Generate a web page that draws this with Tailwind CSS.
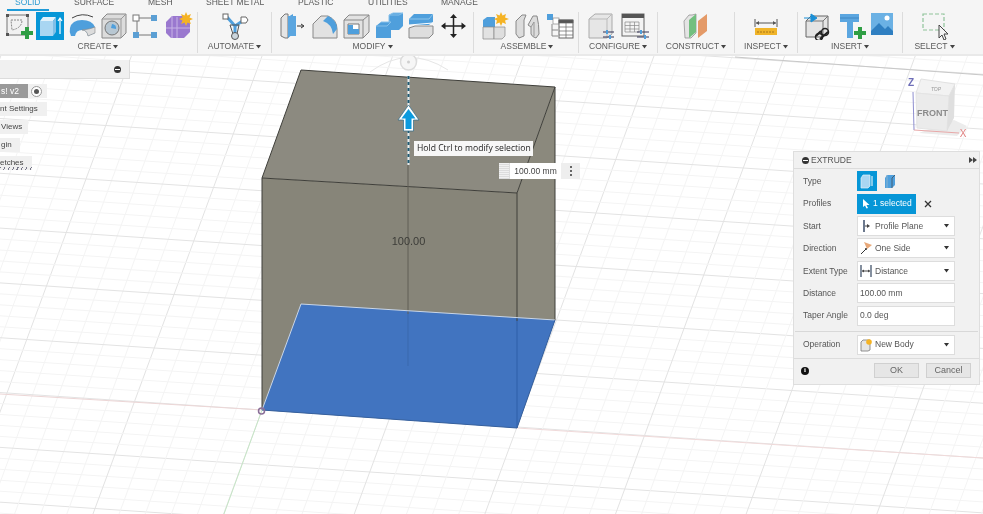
<!DOCTYPE html>
<html lang="en">
<head>
  <meta charset="UTF-8" />
  <title>Extrude</title>
  <meta name="viewport" content="width=device-width, initial-scale=1.0">
  <script src="https://cdn.jsdelivr.net/npm/@tailwindcss/browser@4"></script>
</head>
<body class="bg-white">
<div class="relative w-[983px] h-[514px] overflow-hidden bg-white text-[#5a5a5a] blur-[0.3px] font-['Liberation_Sans',sans-serif]">

  <!-- model space -->
  <svg id="canvas" class="absolute left-0 top-0" width="983" height="514" viewBox="0 0 983 514">
    <g id="grid"></g>
    <line x1="0" y1="394" x2="262" y2="410" stroke="#ecd6d6"/>
    <line x1="517" y1="428" x2="983" y2="458" stroke="#f0dada"/>
    <line x1="262" y1="410" x2="224" y2="514" stroke="#c6e6c6"/>
    <line x1="735" y1="57" x2="983" y2="75" stroke="#c8c8c8"/>
    <path d="M370 72Q408 44 448 70" fill="none" stroke="#e6e6e6"/>
    <circle cx="408.5" cy="62" r="8" fill="#f6f6f6" stroke="#dcdcdc" stroke-width="1.5"/>
    <circle cx="408.5" cy="62" r="1.5" fill="#cfcfcf"/>
    <polygon points="301,70 555,87 517,193 262,178" fill="#8c8a80"/>
    <polygon points="262,178 517,193 517,428 262,410" fill="#878579"/>
    <polygon points="517,193 555,87 555,320 517,428" fill="#8b897d"/>
    <polygon points="301,304 555,320 517,428 262,410" fill="#4174c0"/>
    <path d="M301 70L555 87L517 193L262 178ZM262 178V410M517 193V321M555 87V320" fill="none" stroke="#3f3f3a"/>
    <line x1="517" y1="321" x2="517" y2="428" stroke="#2f5fa8"/>
    <line x1="408" y1="165" x2="408" y2="314" stroke="#605f57"/>
    <line x1="408" y1="314" x2="408" y2="366" stroke="#3a69ad"/>
    <path d="M262 410L301 304L555 320" fill="none" stroke="#c9d6e8"/>
    <path d="M262 410L517 428L555 320" fill="none" stroke="#35609f"/>
    <circle cx="261.500" cy="411" r="3" fill="none" stroke="#8a6f98" stroke-width="1.500"/>
    <line x1="408.500" y1="76" x2="408.500" y2="165" stroke="#e8eef0" stroke-width="2"/>
    <line x1="408.500" y1="76" x2="408.500" y2="165" stroke="#1f5a73" stroke-width="2" stroke-dasharray="3 3"/>
    <path d="M408.500 105L419 120H413.500V131H403.500V120H398Z" fill="#fff" stroke="#2d6b8a" stroke-width=".7" stroke-linejoin="round"/>
    <path d="M408.500 109L415.500 118.500H411.500V129H405.500V118.500H401.500Z" fill="#0b9ade"/>
    <text x="408.500" y="245" text-anchor="middle" font-size="11" fill="#3c3c38">100.00</text>

    <!-- view cube -->
    <polygon points="919,133 957,136 967,126 954,120" fill="#ececec"/>
    <polygon points="921,79 955,84 949,96 916,93" fill="#f2f2f2" stroke="#e2e2e2"/>
    <polygon points="916,93 949,96 947,131 917,128" fill="#ebebeb" stroke="#e4e4e4"/>
    <polygon points="949,96 955,84 954,118 947,131" fill="#dfdfdf"/>
    <text x="936" y="91" text-anchor="middle" font-size="5" font-style="italic" fill="#999">TOP</text>
    <text x="932.500" y="116" text-anchor="middle" font-size="9" font-weight="bold" fill="#8b8b8b">FRONT</text>
    <line x1="913" y1="92" x2="914" y2="130" stroke="#8f8fd0"/>
    <line x1="914" y1="130" x2="959" y2="133" stroke="#e8a8a8"/>
    <text x="911" y="86" text-anchor="middle" font-size="10" font-weight="bold" fill="#6f6fb8">Z</text>
    <text x="963" y="137" text-anchor="middle" font-size="10" fill="#e08080">X</text>
  </svg>

  <!-- toolbar -->
  <header class="relative h-[56px] bg-[#f5f5f5] border-b-2 border-[#e9e9e9]">
    <nav class="relative h-[12px] text-[8.5px] leading-none">
      <span class="absolute left-[15px] top-[-2px] text-[#2d9bd2]">SOLID</span>
      <span class="absolute left-[74px] top-[-2px]">SURFACE</span>
      <span class="absolute left-[148px] top-[-2px]">MESH</span>
      <span class="absolute left-[206px] top-[-2px]">SHEET METAL</span>
      <span class="absolute left-[298px] top-[-2px]">PLASTIC</span>
      <span class="absolute left-[368px] top-[-2px]">UTILITIES</span>
      <span class="absolute left-[441px] top-[-2px]">MANAGE</span>
      <i class="absolute left-[7px] top-[9px] w-[42px] h-[2px] bg-[#1f9bd8]"></i>
    </nav>
    <div class="flex h-[41px]">
      <section class="w-[198px] border-r border-[#dcdcdc] flex flex-col items-center pr-[1px]">
        <div class="flex h-[28px]">
          <svg width="32" height="28"><rect x="5" y="3" width="21" height="20" fill="#f1f1f1" stroke="#777"/><path d="M9 8H20Q20 16 10 18Z" fill="none" stroke="#888" stroke-dasharray="2 1"/><path d="M4 2h3v3H4zM24 2h3v3h-3zM4 21h3v3H4z" fill="#555"/><path d="M21 19h4v-4h4v4h4v4h-4v4h-4v-4h-4z" transform="translate(-2 0)" fill="#2f9e44"/></svg>
          <svg width="32" height="28"><rect x="2" width="28" height="28" fill="#0696d7"/><path d="M6 9l3-4h13l-3 4z" fill="#e3f2fb"/><rect x="6" y="9" width="13" height="15" fill="#a9d6f2"/><path d="M19 9l3-4v15l-3 4z" fill="#7fbfe8"/><path d="M26 22V6M24 9l2-3 2 3" fill="none" stroke="#fff" stroke-width="1.200"/></svg>
          <svg width="32" height="28"><path d="M4 16Q6 8 16 8Q26 8 29 15V21L22 24Q21 18 16 18Q10 18 9 24H5Q3 20 4 16Z" fill="#4f9fdc"/><path d="M29 15V21L22 24Q21 18 16 18Q25 17 29 15Z" fill="#dcdcdc" stroke="#888" stroke-width=".6"/><path d="M6 6Q16 0 27 5" fill="none" stroke="#444"/></svg>
          <svg width="32" height="28"><path d="M4 7L9 2H28V21L23 26H4Z" fill="#dcdcdc" stroke="#888"/><path d="M23 7V26M4 7H23M23 7L28 2" fill="none" stroke="#999"/><circle cx="14" cy="16" r="7" fill="#b8c7d2" stroke="#777"/><path d="M14 12a4 4 0 0 1 4 5l-5-1z" fill="#4f9fdc"/></svg>
          <svg width="32" height="28"><path d="M9 6H21M9 23H21M7 9V20" stroke="#777" fill="none"/><rect x="3" y="3" width="6" height="6" fill="#fff" stroke="#777"/><rect x="21" y="3" width="6" height="6" fill="#5b9fd4"/><rect x="3" y="20" width="6" height="6" fill="#5b9fd4"/><rect x="21" y="20" width="6" height="6" fill="#5b9fd4"/></svg>
          <svg width="32" height="28"><path d="M4 10L10 4H24L28 8V20L22 26H9L4 21Z" fill="#9a78cf"/><path d="M4 16H28M15 5V26M10 4V26" stroke="#c7b3e6" fill="none"/><path d="M24 0l1.500 3.500L29 2l-1.500 3.500L31 7l-3.500 1.500L29 12l-3.500-1.500L24 14l-1.500-3.500L19 12l1.500-3.500L17 7l3.500-1.500L19 2l3.500 1.500z" fill="#f5b324"/></svg>
        </div>
        <div class="flex items-center gap-[2px] h-[17px] text-[8.5px] leading-none">CREATE <svg width="5" height="4"><path d="M0 0h5L2.500 3.500z" fill="#444"/></svg></div>
      </section>
      <section class="w-[74px] border-r border-[#dcdcdc] flex flex-col items-center">
        <div class="flex h-[28px]">
          <svg width="32" height="28"><path d="M8 5L16 14L25 8M16 14V23" fill="none" stroke="#4f9fdc" stroke-width="3"/><path d="M11 13L14 22H18L20 13Z" fill="none" stroke="#555"/><rect x="4" y="2" width="5" height="5" fill="#fff" stroke="#666"/><path d="M22 5h5l2 3-2 3h-5z" fill="#fff" stroke="#666"/><circle cx="16" cy="24" r="3.500" fill="#cbd5dc" stroke="#555"/></svg>
        </div>
        <div class="flex items-center gap-[2px] h-[17px] text-[8.5px] leading-none">AUTOMATE <svg width="5" height="4"><path d="M0 0h5L2.500 3.500z" fill="#444"/></svg></div>
      </section>
      <section class="w-[202px] border-r border-[#dcdcdc] flex flex-col items-center">
        <div class="flex gap-[0.400px] h-[28px]">
          <svg width="32" height="28"><path d="M5 6L9 2H12V26H9L5 24Z" fill="#e5e5e5" stroke="#777"/><path d="M12 5L17 2V22L12 26Z" fill="#4f9fdc"/><rect x="12" y="4" width="8" height="20" fill="#5ba6e0"/><path d="M21 14H27M25 12l3 2-3 2" stroke="#333" fill="none"/></svg>
          <svg width="32" height="28"><path d="M5 12L13 4H20Q29 8 29 17V26H5Z" fill="#e2e2e2" stroke="#888"/><path d="M20 4Q29 8 29 17L25 22Q24 12 15 9Z" fill="#4f9fdc"/></svg>
          <svg width="32" height="28"><path d="M4 8L9 3H29V20L23 26H4Z" fill="#e2e2e2" stroke="#888"/><path d="M4 8H23V26M23 8L29 3" fill="none" stroke="#888"/><path d="M8 12H19V22H8Z" fill="#fff" stroke="#777"/><path d="M8 13H13V17H19V22H8Z" fill="#4f9fdc"/></svg>
          <svg width="32" height="28"><path d="M3 26V14L8 10H16V3L20 1H30V14L26 18H18V26Z" fill="#4f9fdc"/><path d="M16 10V3L20 1H30L26 3H16M8 10H18L14 14H3" fill="none" stroke="#86c0ea"/></svg>
          <svg width="32" height="28"><path d="M4 7L9 2H28V10L24 13H4Z" fill="#4f9fdc"/><path d="M4 7H24L28 2" fill="none" stroke="#8cc4ea"/><path d="M4 13L28 11M4 15.500L28 13" stroke="#fff"/><path d="M4 16L10 14H28V22L24 26H4Z" fill="#dedede" stroke="#888"/></svg>
          <svg width="32" height="28"><path d="M16.500 5V23M7 14H26" stroke="#222" stroke-width="1.500"/><path d="M16.500 2l3.500 4h-7zM16.500 26l3.500-4h-7zM4 14l4.500-3.500v7zM29 14l-4.500-3.500v7z" fill="#222"/></svg>
        </div>
        <div class="flex items-center gap-[2px] h-[17px] text-[8.5px] leading-none">MODIFY <svg width="5" height="4"><path d="M0 0h5L2.500 3.500z" fill="#444"/></svg></div>
      </section>
      <section class="w-[105px] border-r border-[#dcdcdc] flex flex-col items-center pl-[2px]">
        <div class="flex gap-[0.500px] h-[28px]">
          <svg width="32" height="28"><path d="M4 8L8 5H16V15H4Z" fill="#4f9fdc"/><path d="M4 15H15V27H4Z" fill="#e2e2e2" stroke="#888" stroke-width=".7"/><path d="M15 15H26V24L23 27H15Z" fill="#dedede" stroke="#888" stroke-width=".7"/><path d="M22 0l1.500 3.500L27 2l-1 3.500L30 7l-4 1.500L27 12l-3.500-1.500L22 14l-1.500-3.500L17 12l1-3.500L15 7l3.500-1.500L17 2l3.500 1.500z" fill="#f5b324"/></svg>
          <svg width="32" height="28"><path d="M5 9L11 3H15L13 8V24L8 26L5 22Z" fill="#dcdcdc" stroke="#888"/><path d="M17 13L22 4H26Q28 12 28 22L25 26Q21 25 20 22V15Z" fill="#dcdcdc" stroke="#888"/><path d="M20 15L23 10V24" fill="none" stroke="#999"/></svg>
          <svg width="32" height="28"><rect x="3" y="2" width="6" height="6" fill="#4f9fdc"/><rect x="9" y="6" width="6" height="6" fill="#fff" stroke="#888" stroke-width=".7"/><path d="M8 12V24H14M8 18H14" fill="none" stroke="#888"/><rect x="15" y="8" width="14" height="18" fill="#fff" stroke="#666"/><path d="M15 8h14v3H15zM15 15h14M15 19h14M15 23h14M22 11v15" fill="#555" stroke="#666" stroke-width=".7"/></svg>
        </div>
        <div class="flex items-center gap-[2px] h-[17px] text-[8.5px] leading-none">ASSEMBLE <svg width="5" height="4"><path d="M0 0h5L2.500 3.500z" fill="#444"/></svg></div>
      </section>
      <section class="w-[79px] border-r border-[#dcdcdc] flex flex-col items-center">
        <div class="flex gap-[1px] h-[28px]">
          <svg width="32" height="28"><path d="M3 7L9 2H26V22L21 26H3Z" fill="#e6e6e6" stroke="#aaa"/><path d="M3 7H21V26M21 7L26 2" fill="none" stroke="#bbb"/><path d="M17 20H28M17 25H28" stroke="#335"/><path d="M21 18v4M24 23v4" stroke="#4f9fdc" stroke-width="2"/></svg>
          <svg width="32" height="28"><rect x="3" y="2" width="22" height="22" fill="#f4f4f4" stroke="#666"/><rect x="3" y="2" width="22" height="4" fill="#555"/><path d="M6 10h14v10H6zM6 13.500h14M6 17h14M11 10v10M15.500 10v10" fill="none" stroke="#888" stroke-width=".7"/><path d="M18 20H30M18 25H30" stroke="#335"/><path d="M22 18v4M26 23v4" stroke="#4f9fdc" stroke-width="2"/></svg>
        </div>
        <div class="flex items-center gap-[2px] h-[17px] text-[8.5px] leading-none">CONFIGURE <svg width="5" height="4"><path d="M0 0h5L2.500 3.500z" fill="#444"/></svg></div>
      </section>
      <section class="w-[77px] border-r border-[#dcdcdc] flex flex-col items-center">
        <div class="flex h-[28px]">
          <svg width="32" height="28"><path d="M4 9L9 3H12L16 2V21L11 26H5Z" fill="#e4e4e4" stroke="#888" stroke-width=".7"/><path d="M9 8L16 2V20L9 26Z" fill="#72bf7f"/><path d="M18 9L27 2V19L18 26Z" fill="#e49a68"/></svg>
        </div>
        <div class="flex items-center gap-[2px] h-[17px] text-[8.5px] leading-none">CONSTRUCT <svg width="5" height="4"><path d="M0 0h5L2.500 3.500z" fill="#444"/></svg></div>
      </section>
      <section class="w-[63px] border-r border-[#dcdcdc] flex flex-col items-center">
        <div class="flex h-[28px]">
          <svg width="32" height="28"><path d="M5 7V15M27 7V15M6 11H26" stroke="#555" fill="none"/><path d="M6 11l3-2v4zM26 11l-3-2v4z" fill="#555"/><rect x="5" y="16" width="22" height="7" fill="#f0b429"/><path d="M8 19v2M11 19v2M14 19v2M17 19v2M20 19v2M23 19v2" stroke="#a8761a"/></svg>
        </div>
        <div class="flex items-center gap-[2px] h-[17px] text-[8.5px] leading-none">INSPECT <svg width="5" height="4"><path d="M0 0h5L2.500 3.500z" fill="#444"/></svg></div>
      </section>
      <section class="w-[105px] border-r border-[#dcdcdc] flex flex-col items-center">
        <div class="flex h-[28px]">
          <svg width="34" height="28"><path d="M4 9L9 4H26V20L21 25H4Z" fill="#e4e4e4" stroke="#666"/><path d="M21 9V25M21 9H4M21 9L26 4" fill="none" stroke="#777"/><path d="M2 6H11M9 2l6 4-6 4z" fill="#1b8fd6" stroke="#1b8fd6"/><path d="M14 24L19 19M18 27l8-7" stroke="#222" stroke-width="2"/><circle cx="23" cy="20" r="3.500" fill="none" stroke="#222" stroke-width="1.500"/><circle cx="17" cy="25" r="3.500" fill="none" stroke="#222" stroke-width="1.500"/></svg>
          <svg width="32" height="28"><path d="M4 2H23V10H17V26H11V10H4Z" fill="#5ba6e0"/><path d="M4 6H23" stroke="#3f86c2"/><path d="M18 19h4v-4h4v4h4v4h-4v4h-4v-4h-4z" fill="#2f9e44"/></svg>
          <svg width="30" height="28"><rect x="3" y="1" width="22" height="22" fill="#6bb1e4"/><path d="M3 19L11 11L17 17L20 14L25 19V23H3Z" fill="#2f7fc1"/><circle cx="19" cy="6" r="2.500" fill="#fff"/></svg>
        </div>
        <div class="flex items-center gap-[2px] h-[17px] text-[8.5px] leading-none">INSERT <svg width="5" height="4"><path d="M0 0h5L2.500 3.500z" fill="#444"/></svg></div>
      </section>
      <section class="w-[63px] flex flex-col items-center">
        <div class="flex h-[28px]">
          <svg width="32" height="28"><rect x="4" y="2" width="21" height="16" fill="none" stroke="#8fc49a" stroke-width="1.200" stroke-dasharray="4 2"/><path d="M20 13V26L23 23L25 28L27 27L25 22H29Z" fill="#f4f4f4" stroke="#444"/></svg>
        </div>
        <div class="flex items-center gap-[2px] h-[17px] text-[8.5px] leading-none">SELECT <svg width="5" height="4"><path d="M0 0h5L2.500 3.500z" fill="#444"/></svg></div>
      </section>
    </div>
  </header>

  <!-- browser -->
  <aside class="absolute left-0 top-[60px] text-[8px] leading-none text-[#444]">
    <div class="w-[130px] h-[19px] bg-[#f0f0f0] border-b border-r border-[#dcdcdc] flex items-center justify-end pr-[8px]">
      <span class="flex items-center justify-center size-[7px] rounded-full bg-[#333]"><i class="w-[5px] h-[1px] bg-white"></i></span>
    </div>
    <div class="mt-[5px] flex flex-col items-start gap-[4px]">
      <div class="flex items-center h-[14px] w-[47px] bg-[#f0f0f0]">
        <span class="flex items-center w-[28px] h-full bg-[#9a9a9a] text-white text-[8.5px] pl-[1px]">s! v2</span>
        <span class="ml-[3px] flex items-center justify-center size-[11px] rounded-full bg-white border border-[#999]"><i class="size-[5px] rounded-full bg-[#555]"></i></span>
      </div>
      <div class="flex items-center h-[14px] w-[47px] bg-[#f0f0f0] whitespace-nowrap overflow-hidden">nt Settings</div>
      <div class="flex items-center h-[14px] w-[28px] bg-[#f0f0f0] pl-[1px]">Views</div>
      <div class="flex items-center h-[14px] w-[20px] bg-[#f0f0f0] pl-[1px]">gin</div>
      <div class="relative flex items-center h-[14px] w-[32px] bg-[#f0f0f0]">etches
        <i class="absolute left-0 bottom-0 w-full h-[3px] bg-[repeating-linear-gradient(115deg,#778_0,#778_1px,transparent_1px,transparent_4px)]"></i>
      </div>
    </div>
  </aside>

  <!-- tooltip and distance input -->
  <div class="absolute left-[414px] top-[141px] w-[119px] h-[15px] bg-[#f7f7f7] text-[#222] text-[8.6px] leading-[15px] pl-[3px] whitespace-nowrap font-['Open_Sans',sans-serif]">Hold Ctrl to modify selection</div>
  <div class="absolute left-[499px] top-[163px] flex h-[16px] w-[81px] items-center bg-[#eeeeee]">
    <span class="w-[11px] h-full border-r border-[#ddd] bg-[repeating-linear-gradient(0deg,#ddd_0,#ddd_1px,#f1f1f1_1px,#f1f1f1_2px)]"></span>
    <span class="w-[51px] h-full bg-white text-[#444] text-[8.5px] leading-[16px] text-center">100.00 mm</span>
    <span class="flex-1 flex flex-col items-center gap-[2px]"><i class="size-[2px] bg-[#666]"></i><i class="size-[2px] bg-[#666]"></i><i class="size-[2px] bg-[#666]"></i></span>
  </div>

  <!-- extrude dialog -->
  <div class="absolute left-[793px] top-[151px] w-[187px] h-[234px] bg-[#f1f1f1] border border-[#dedede] text-[8.5px] text-[#555] leading-none">
    <div class="h-[17px] border-b border-[#dcdcdc] flex items-center pl-[8px] pr-[2px]">
      <span class="flex items-center justify-center size-[7px] rounded-full bg-[#333] mr-[2px]"><i class="w-[5px] h-[1px] bg-white"></i></span>
      <span class="flex-1">EXTRUDE</span>
      <svg width="8" height="6"><path d="M0 0l4 3-4 3zM4 0l4 3-4 3z" fill="#444"/></svg>
    </div>
    <div class="pl-[9px] pr-[24px] pt-[1px]">
      <div class="flex items-center h-[22.400px]"><span class="w-[54px]">Type</span>
        <span class="flex items-center justify-center size-[20px] bg-[#0696d7]"><svg width="14" height="15"><path d="M1 4L3 1H10V12L8 14H1Z" fill="#a9d6f2" stroke="#e3f2fb" stroke-width=".7"/><path d="M12 12V2" stroke="#fff"/></svg></span>
        <span class="ml-[3px] flex items-center justify-center size-[20px]"><svg width="14" height="15"><path d="M2 4L4 1H12V11L9 14H2Z" fill="#4f9fdc"/><path d="M4 1V14" stroke="#89b3cf"/><path d="M9 4V14M9 4L12 1" stroke="#3f4e5a" stroke-width=".8"/></svg></span>
      </div>
      <div class="flex items-center h-[22.400px]"><span class="w-[54px]">Profiles</span>
        <span class="flex items-center h-[20px] w-[59px] bg-[#0696d7] text-white pl-[6px]"><svg width="7" height="10" class="mr-[3px]"><path d="M0 0V8L2 6.500L3.500 9.500L5 9L3.500 6H6.500Z" fill="#fff"/></svg>1 selected</span>
        <svg width="8" height="8" class="ml-[8px]"><path d="M1 1L7 7M7 1L1 7" stroke="#333" stroke-width="1.300"/></svg>
      </div>
      <div class="flex items-center h-[22.400px]"><span class="w-[54px]">Start</span>
        <div class="flex items-center h-[20px] w-[98px] bg-white border border-[#ddd] pl-[1px] pr-[5px]"><svg width="14" height="14" class="mr-[2px]"><path d="M5 1V13" stroke="#1c3050" stroke-width="1.300"/><path d="M6 7H9" stroke="#444"/><path d="M8 5l3 2-3 2z" fill="#444"/></svg><span class="flex-1">Profile Plane</span><svg width="5" height="4"><path d="M0 0h5L2.500 3.500z" fill="#333"/></svg></div>
      </div>
      <div class="flex items-center h-[22.400px]"><span class="w-[54px]">Direction</span>
        <div class="flex items-center h-[20px] w-[98px] bg-white border border-[#ddd] pl-[1px] pr-[5px]"><svg width="14" height="14" class="mr-[2px]"><path d="M5 1L13 4L8 8Z" fill="#e8a878"/><path d="M7 8L2 13" stroke="#333"/><circle cx="7" cy="8" r="1" fill="#333"/></svg><span class="flex-1">One Side</span><svg width="5" height="4"><path d="M0 0h5L2.500 3.500z" fill="#333"/></svg></div>
      </div>
      <div class="flex items-center h-[22.400px]"><span class="w-[54px]">Extent Type</span>
        <div class="flex items-center h-[20px] w-[98px] bg-white border border-[#ddd] pl-[1px] pr-[5px]"><svg width="14" height="14" class="mr-[2px]"><path d="M2 1V13M12 1V13" stroke="#34475f" stroke-width="1.200"/><path d="M3 7H11" stroke="#444"/><path d="M3 7l2-1.500v3zM11 7l-2-1.500v3z" fill="#444"/></svg><span class="flex-1">Distance</span><svg width="5" height="4"><path d="M0 0h5L2.500 3.500z" fill="#333"/></svg></div>
      </div>
      <div class="flex items-center h-[22.400px]"><span class="w-[54px]">Distance</span>
        <div class="flex items-center h-[20px] w-[98px] bg-white border border-[#ddd] pl-[2px]">100.00 mm</div>
      </div>
      <div class="flex items-center h-[22.400px]"><span class="w-[54px]">Taper Angle</span>
        <div class="flex items-center h-[20px] w-[98px] bg-white border border-[#ddd] pl-[2px]">0.0 deg</div>
      </div>
    </div>
    <div class="mx-[1px] mt-[4px] border-t border-[#d8d8d8]"></div>
    <div class="flex items-center h-[26px] pl-[9px]"><span class="w-[54px]">Operation</span>
      <div class="flex items-center h-[20px] w-[98px] bg-white border border-[#ddd] pl-[1px] pr-[5px]"><svg width="14" height="14" class="mr-[2px]"><path d="M2 4L4 2H11V12L9 13H2Z" fill="#e6e6e6" stroke="#777" stroke-width=".8"/><circle cx="10" cy="4" r="2.800" fill="#f5b324"/></svg><span class="flex-1">New Body</span><svg width="5" height="4"><path d="M0 0h5L2.500 3.500z" fill="#333"/></svg></div>
    </div>
    <div class="flex items-center h-[25px] border-t border-[#dcdcdc] pl-[7px] pr-[7px]">
      <span class="flex items-center justify-center size-[8px] rounded-full bg-[#111] text-white text-[7px] font-bold font-['Liberation_Serif',serif]">i</span>
      <button class="ml-[65px] w-[45px] h-[15px] bg-[#e6e6e6] border border-[#d0d0d0] text-[#666] text-[9px] leading-none">OK</button>
      <button class="ml-[7px] w-[45px] h-[15px] bg-[#e6e6e6] border border-[#d0d0d0] text-[#666] text-[9px] leading-none">Cancel</button>
    </div>
  </div>
</div>

<script>
  // ground grid: 10 mm minor cells, 50 mm major cells
  const grid = document.getElementById('grid');
  const ox = 262, oy = 410, ux = 25.5, uy = 1.7, vx = 3.95, vy = -10.7;
  let out = '';
  for (let i = -60; i <= 60; i++) {
    const major = i % 5 === 0;
    const stroke = major ? '#e3e3e3' : '#f4f4f4';
    out += `<line x1="${ox + i * ux - 60 * vx}" y1="${oy + i * uy - 60 * vy}" x2="${ox + i * ux + 60 * vx}" y2="${oy + i * uy + 60 * vy}" stroke="${stroke}"/>`;
    out += `<line x1="${ox + i * vx - 60 * ux}" y1="${oy + i * vy - 60 * uy}" x2="${ox + i * vx + 60 * ux}" y2="${oy + i * vy + 60 * uy}" stroke="${stroke}"/>`;
  }
  grid.innerHTML = out;
</script>
</body>
</html>
